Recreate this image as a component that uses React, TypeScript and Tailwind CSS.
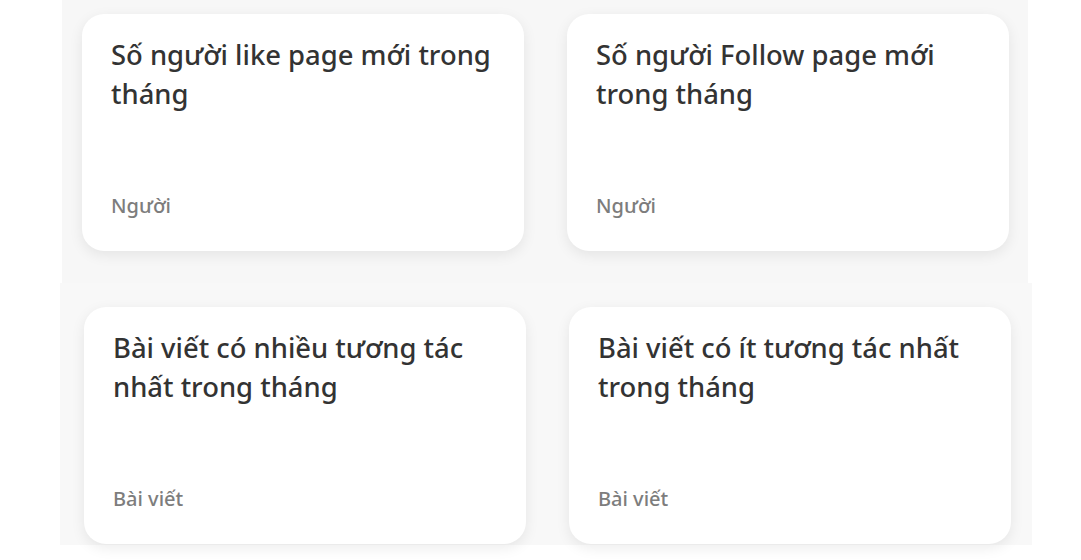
import React from 'react';

interface StatCardProps {
  lines: string[];
  unit: string;
}

const StatCard: React.FC<StatCardProps> = ({ lines, unit }) => (
  <div className="flex h-[237px] w-[442px] flex-col justify-between rounded-[22px] bg-white pl-[29px] pr-6 pt-[21px] pb-[30px] shadow-[0_4px_14px_rgba(0,0,0,0.08)]">
    <h3 className="text-[27.4px] font-medium leading-[39px] text-[#333333]">
      {lines.map((line, i) => (
        <div key={i}>{line}</div>
      ))}
    </h3>
    <p className="text-[20px] font-medium text-[#7d7d7d]">{unit}</p>
  </div>
);

const App: React.FC = () => {
  return (
    <div className="h-[560px] w-[1081px] bg-white font-['Noto_Sans',sans-serif]">
      <section className="ml-[62px] flex h-[283px] w-[966px] gap-[43px] bg-[#f7f7f7] pl-5 pt-[14px]">
        <StatCard lines={['Số người like page mới trong', 'tháng']} unit="Người" />
        <StatCard lines={['Số người Follow page mới', 'trong tháng']} unit="Người" />
      </section>
      <section className="ml-[60px] flex h-[262px] w-[972px] gap-[43px] bg-[#f8f8f8] pl-6 pt-6">
        <StatCard lines={['Bài viết có nhiều tương tác', 'nhất trong tháng']} unit="Bài viết" />
        <StatCard lines={['Bài viết có ít tương tác nhất', 'trong tháng']} unit="Bài viết" />
      </section>
    </div>
  );
};

export default App;
